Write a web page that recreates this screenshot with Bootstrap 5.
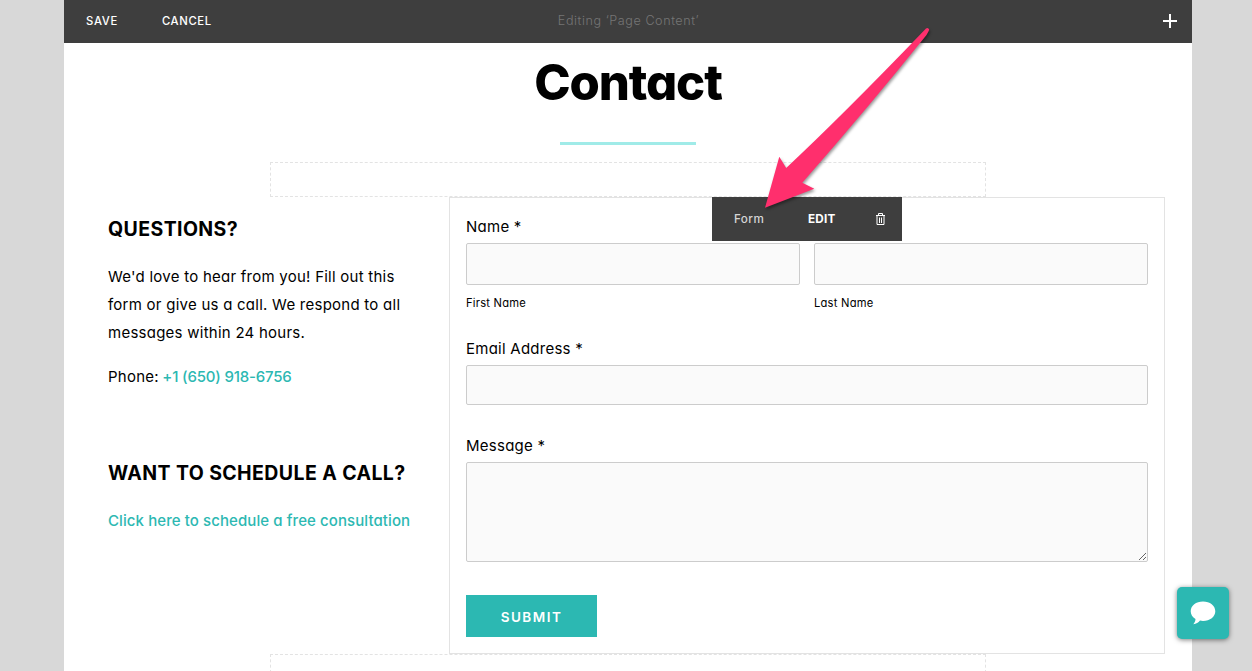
<!DOCTYPE html>
<html lang="en">
<head>
    <meta charset="UTF-8">
    <meta name="viewport" content="width=device-width, initial-scale=1.0">
    <title>Contact</title>
    <link href="https://cdn.jsdelivr.net/npm/bootstrap@5.3.0/dist/css/bootstrap.min.css" rel="stylesheet">
    <style>
        body {
            background-color: #d8d8d8;
            color: #000;
            font-family: Inter, "Liberation Sans", sans-serif;
            font-feature-settings: "cv11";
            font-size: 15px;
            letter-spacing: .25px;
            line-height: 28px;
            height: 100vh;
            overflow: hidden;
        }
        .page {
            width: 1128px;
            height: 671px;
            margin-left: 64px;
            overflow: hidden;
        }
        .editor-bar {
            height: 43px;
            background-color: #3e3e3e;
            padding: 0 15px 1px 22px;
            font-feature-settings: normal;
            font-size: 11.3px;
            line-height: 1;
        }
        .editor-bar a {
            color: #fff;
            font-weight: 500;
            letter-spacing: .65px;
            text-decoration: none;
            padding-top: 2px;
        }
        .bar-side { flex: 1 1 0; gap: 44px; }
        .editor-status {
            color: #757575;
            font-size: 12.6px;
            letter-spacing: .57px;
            font-weight: 300;
            margin-left: -6px;
        }
        .page-head { height: 119px; }
        .page-title {
            font-size: 49px;
            line-height: 60px;
            font-weight: 800;
            letter-spacing: -1.1px;
            margin: 10px 0 0;
        }
        .title-rule {
            width: 136px;
            height: 3px;
            margin-top: 29px;
            background-color: #a0ebe8;
        }
        .drop-zone {
            width: 716px;
            height: 35px;
            border: 1px dashed #e3e3e3;
        }
        .content-row { height: 457px; padding: 0 27px 0 44px; }
        .info-col { width: 341px; padding-top: 18px; }
        .info-col h2 {
            font-size: 19.5px;
            line-height: 28px;
            font-weight: 700;
            letter-spacing: .4px;
            margin-bottom: 20px;
        }
        .info-col p { margin-bottom: 16px; white-space: nowrap; }
        .info-col a {
            color: #2cb8b2;
            font-weight: 500;
            letter-spacing: .09px;
            text-decoration: none;
        }
        .info-col .phone-link { letter-spacing: -.18px; margin-left: -1px; }
        .call-block { margin-top: 68px; }
        .form-block {
            width: 716px;
            border: 1px solid #e3e3e3;
            padding: 15px 16px 0;
        }
        .form-block label { display: block; padding-bottom: 2px; }
        .form-block .form-control {
            background-color: #fafafa;
            border: 1px solid #ccc;
            border-radius: 2px;
            padding: 4px;
        }
        .name-field { width: 334px; }
        .name-field .form-control { height: 42px; }
        .name-field small {
            display: block;
            font-size: 11.2px;
            line-height: 36px;
            letter-spacing: .22px;
        }
        .form-block .mail-label { margin-top: 14px; }
        .form-block .msg-label { margin-top: 27px; }
        .form-block .email-field { height: 40px; }
        .form-block .message-field { height: 100px; resize: vertical; }
        .submit-btn {
            width: 131px;
            height: 42px;
            margin-top: 33px;
            padding: 2px 0 0;
            border: 0;
            background-color: #2cb8b2;
            color: #fff;
            font-size: 13.5px;
            font-weight: 600;
            letter-spacing: 1.5px;
        }
        .block-toolbar {
            left: 262px;
            top: -1px;
            width: 190px;
            height: 44px;
            padding: 0 16px 0 22px;
            background-color: #3e3e3e;
            color: #fff;
            font-size: 11.7px;
            font-feature-settings: normal;
        }
        .block-name { width: 74px; color: #d5d5d5; letter-spacing: .4px; }
        .pointer-arrow {
            left: 755px;
            top: 20px;
            z-index: 5;
            filter: drop-shadow(1px 2px 1.5px rgba(0,0,0,.4));
        }
        .chat-btn {
            right: 23px;
            bottom: 32px;
            width: 52px;
            height: 52px;
            border: 0;
            border-radius: 5px;
            background-color: #2cb8b2;
            box-shadow: 0 1px 5px rgba(0,0,0,.5);
        }
    </style>
</head>
<body>
<div class="page bg-white">
    <nav class="editor-bar d-flex align-items-center">
        <div class="bar-side d-flex">
            <a href="#">SAVE</a>
            <a href="#">CANCEL</a>
        </div>
        <span class="editor-status">Editing ‘Page Content’</span>
        <div class="bar-side d-flex justify-content-end">
            <svg width="14" height="14" viewBox="0 0 14 14"><path d="M7 0v14M0 7h14" stroke="#fff" stroke-width="2"/></svg>
        </div>
    </nav>

    <header class="page-head d-flex flex-column align-items-center">
        <h1 class="page-title">Contact</h1>
        <div class="title-rule"></div>
    </header>

    <div class="drop-zone mx-auto"></div>

    <main class="content-row d-flex">
        <section class="info-col">
            <h2>QUESTIONS?</h2>
            <p>We'd love to hear from you! Fill out this<br>form or give us a call. We respond to all<br>messages within 24 hours.</p>
            <p>Phone: <a href="#" class="phone-link">+1 (650) 918-6756</a></p>
            <div class="call-block">
                <h2>WANT TO SCHEDULE A CALL?</h2>
                <p><a href="#">Click here to schedule a free consultation</a></p>
            </div>
        </section>

        <form class="form-block position-relative">
            <label for="fname">Name *</label>
            <div class="d-flex justify-content-between">
                <div class="name-field">
                    <input type="text" id="fname" class="form-control">
                    <small>First Name</small>
                </div>
                <div class="name-field">
                    <input type="text" id="lname" class="form-control">
                    <small>Last Name</small>
                </div>
            </div>
            <label for="email" class="mail-label">Email Address *</label>
            <input type="email" id="email" class="form-control email-field">
            <label for="message" class="msg-label">Message *</label>
            <textarea id="message" class="form-control message-field"></textarea>
            <button type="button" class="submit-btn">SUBMIT</button>

            <!-- toolbar shown over the selected block -->
            <div class="block-toolbar position-absolute d-flex align-items-center">
                <span class="block-name fw-medium">Form</span>
                <span class="fw-bold">EDIT</span>
                <svg class="ms-auto" width="11" height="12" viewBox="0 0 11 12" fill="none" stroke="#fff"><path d="M1 2.500h9M3.500 2V.5h4V2M2 3v8.500h7V3M4.500 4.500V10M6.500 4.500V10"/></svg>
            </div>
        </form>
    </main>

    <div class="drop-zone mx-auto"></div>
</div>

<svg class="pointer-arrow position-absolute" width="180" height="195" viewBox="755 20 180 195">
    <path fill="#ff2f6d" d="M765 207.700 779.300 156.800 786.200 168Q842 116 926 28.600 928 26.800 929.200 29.600 929 31 926.500 35 868 108 802.300 182.700L814.300 188.700Z"/>
</svg>

<button type="button" class="chat-btn position-fixed d-flex align-items-center justify-content-center p-0">
    <svg width="26" height="24" viewBox="0 0 26 24"><path fill="#fff" d="M13 .5C6 .5.700 4.700.700 10.200c0 3.300 1.800 6 4.800 7.800-.1 2-.8 3.500-2.200 5.300 3-.3 5-1.500 6.700-3.700 1 .2 2 .3 3 .3 7 0 12.300-4.200 12.300-9.700S20 .5 13 .5Z"/></svg>
</button>
<script src="https://cdn.jsdelivr.net/npm/bootstrap@5.3.0/dist/js/bootstrap.bundle.min.js"></script>
</body>
</html>
